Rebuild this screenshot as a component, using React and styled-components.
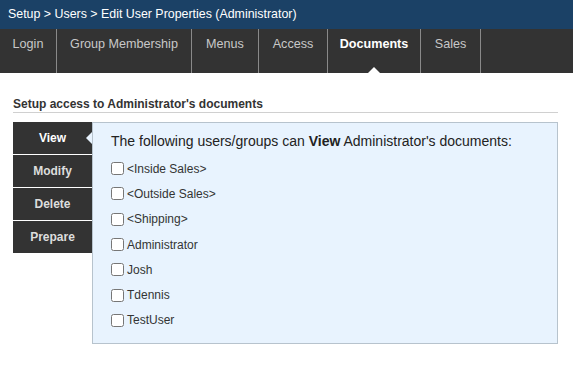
import React from "react";
import styled, { createGlobalStyle } from "styled-components";

const GlobalStyle = createGlobalStyle`
  body {
    margin: 0;
    background: #fff;
    font-family: "Liberation Sans", Arial, sans-serif;
  }
`;

const TitleBar = styled.div`
  height: 29px;
  background: #1b4166;
  color: #fff;
  font-size: 12.4px;
  line-height: 29px;
  padding: 0 8px;
`;

const TabBar = styled.div`
  display: flex;
  height: 44px;
  background: #333;
`;

const Tab = styled.div`
  position: relative;
  box-sizing: border-box;
  width: ${(p) => p.$width}px;
  padding-top: 8px;
  text-align: center;
  border-right: 1px solid #8a8a8a;
  font-size: 12.6px;
  line-height: 15px;
  white-space: nowrap;
  color: ${(p) => (p.$active ? "#fff" : "#c8c8c8")};
  font-weight: ${(p) => (p.$active ? "bold" : "normal")};

  ${(p) =>
    p.$active &&
    `
    &::after {
      content: "";
      position: absolute;
      left: 50%;
      bottom: 0;
      margin-left: -6px;
      border-left: 6px solid transparent;
      border-right: 6px solid transparent;
      border-bottom: 6px solid #fff;
    }
  `}
`;

const Page = styled.div`
  padding: 24px 15px 0 13px;
`;

const SectionTitle = styled.div`
  font-size: 12px;
  line-height: 15px;
  font-weight: bold;
  color: #333;
  border-bottom: 1px solid #d0d0d0;
  margin-bottom: 9px;
`;

const Body = styled.div`
  display: flex;
  align-items: flex-start;
`;

const SideTabs = styled.div`
  display: flex;
  flex-direction: column;
  gap: 1px;
  width: 79px;
`;

const SideTab = styled.div`
  position: relative;
  height: 32px;
  line-height: 32px;
  background: #333;
  text-align: center;
  font-size: 12px;
  font-weight: bold;
  color: ${(p) => (p.$active ? "#fff" : "#ddd")};

  ${(p) =>
    p.$active &&
    `
    &::after {
      content: "";
      position: absolute;
      right: 0;
      top: 50%;
      margin-top: -6px;
      border-top: 6px solid transparent;
      border-bottom: 6px solid transparent;
      border-right: 6px solid #e8f3fe;
    }
  `}
`;

const Panel = styled.div`
  flex: 1;
  height: 222px;
  box-sizing: border-box;
  background: #e8f3fe;
  border: 1px solid #b7c3cd;
  padding: 8px 19px 0 18px;
`;

const Lead = styled.div`
  font-size: 14px;
  line-height: 20px;
  color: #222;
  margin-bottom: 5px;
`;

const Item = styled.label`
  display: flex;
  align-items: center;
  height: 25.3px;
  font-size: 12px;
  color: #333;

  input {
    width: 13px;
    height: 13px;
    margin: 0 3px 0 0;
  }
`;

const tabs = [
  { label: "Login", width: 57 },
  { label: "Group Membership", width: 135 },
  { label: "Menus", width: 67 },
  { label: "Access", width: 69 },
  { label: "Documents", width: 93 },
  { label: "Sales", width: 60 },
];
const actions = ["View", "Modify", "Delete", "Prepare"];
const members = [
  "<Inside Sales>",
  "<Outside Sales>",
  "<Shipping>",
  "Administrator",
  "Josh",
  "Tdennis",
  "TestUser",
];

export default function App() {
  return (
    <>
      <GlobalStyle />
      <TitleBar>Setup &gt; Users &gt; Edit User Properties (Administrator)</TitleBar>
      <TabBar>
        {tabs.map((t) => (
          <Tab key={t.label} $width={t.width} $active={t.label === "Documents"}>
            {t.label}
          </Tab>
        ))}
      </TabBar>
      <Page>
        <SectionTitle>Setup access to Administrator's documents</SectionTitle>
        <Body>
          <SideTabs>
            {actions.map((a) => (
              <SideTab key={a} $active={a === "View"}>
                {a}
              </SideTab>
            ))}
          </SideTabs>
          <Panel>
            <Lead>
              The following users/groups can <b>View</b> Administrator's documents:
            </Lead>
            {members.map((m) => (
              <Item key={m}>
                <input type="checkbox" />
                {m}
              </Item>
            ))}
          </Panel>
        </Body>
      </Page>
    </>
  );
}
